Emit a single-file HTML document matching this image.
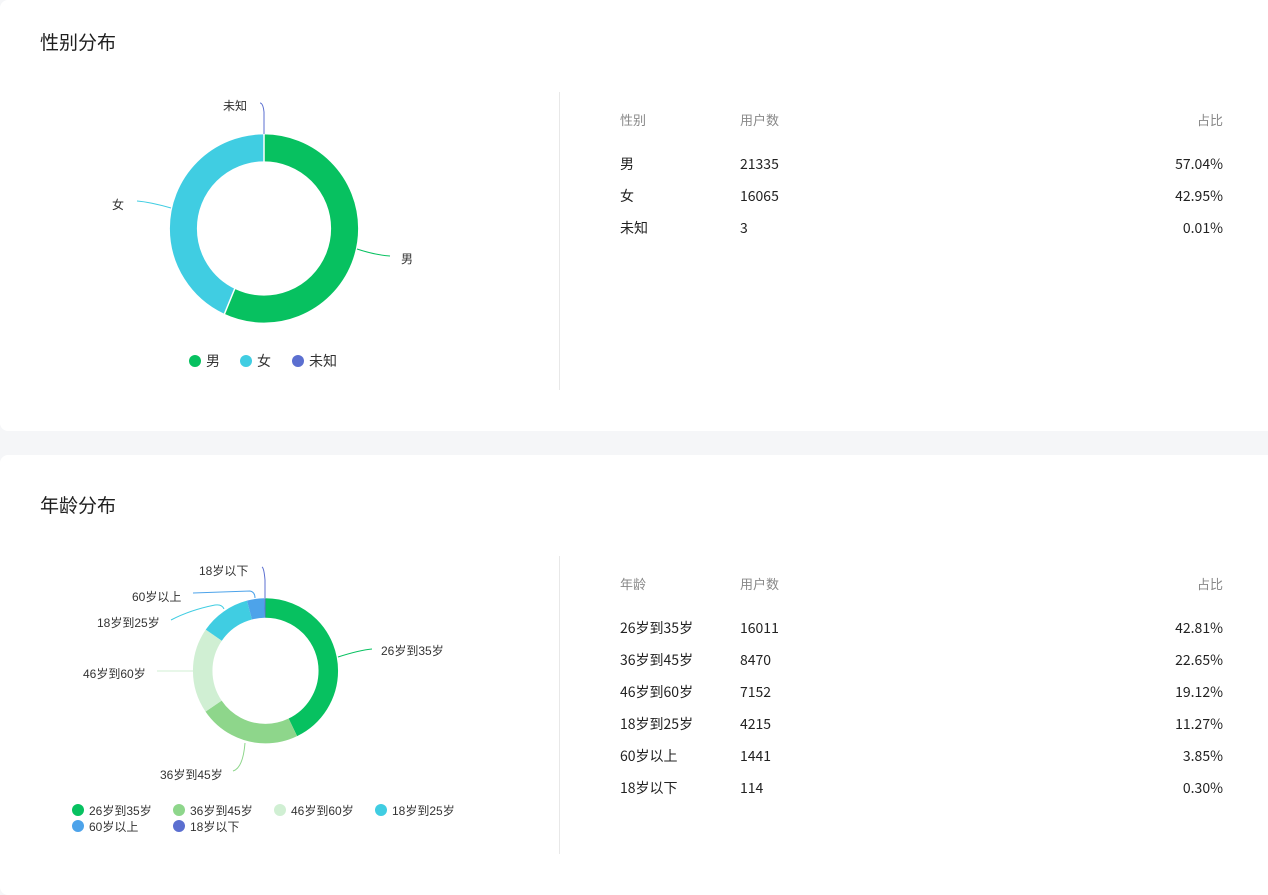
<!DOCTYPE html>
<html><head><meta charset="utf-8"><style>
body{margin:0;width:1268px;height:880px;background:#f5f6f8;font-family:"Liberation Sans","Noto Sans CJK SC",sans-serif;overflow:hidden;position:relative;color:#333}
.card{position:absolute;left:0;width:1280px;background:#fff;border-radius:8px}
.t{position:absolute;font-size:19px;color:#1f1f1f;left:40px;font-family:"Noto Sans CJK SC",sans-serif;line-height:26px}
.div{position:absolute;left:559px;width:1px;background:#e8e8e8}
.row{position:absolute;left:620px;width:603px;height:20px;font-size:14px;color:#222;font-family:"Noto Sans CJK SC",sans-serif;line-height:20px}
.row span{position:absolute;top:0}
.row .c2{left:120px}.row .c3{right:0}
.hd{color:#888;font-size:13px}
svg{position:absolute;left:0;top:0}
</style></head><body>
<div class="card" style="top:0;height:431px"></div>
<div class="card" style="top:455px;height:440px"></div>
<div class="t" style="top:29px">性别分布</div>
<div class="t" style="top:492px">年龄分布</div>
<div class="div" style="top:92px;height:298px"></div>
<div class="div" style="top:556px;height:298px"></div>

<div class="row hd" style="top:110px"><span>性别</span><span class="c2">用户数</span><span class="c3">占比</span></div>
<div class="row" style="top:154px"><span>男</span><span class="c2">21335</span><span class="c3">57.04%</span></div>
<div class="row" style="top:186px"><span>女</span><span class="c2">16065</span><span class="c3">42.95%</span></div>
<div class="row" style="top:218px"><span>未知</span><span class="c2">3</span><span class="c3">0.01%</span></div>

<div class="row hd" style="top:574px"><span>年龄</span><span class="c2">用户数</span><span class="c3">占比</span></div>
<div class="row" style="top:618px"><span>26岁到35岁</span><span class="c2">16011</span><span class="c3">42.81%</span></div>
<div class="row" style="top:650px"><span>36岁到45岁</span><span class="c2">8470</span><span class="c3">22.65%</span></div>
<div class="row" style="top:682px"><span>46岁到60岁</span><span class="c2">7152</span><span class="c3">19.12%</span></div>
<div class="row" style="top:714px"><span>18岁到25岁</span><span class="c2">4215</span><span class="c3">11.27%</span></div>
<div class="row" style="top:746px"><span>60岁以上</span><span class="c2">1441</span><span class="c3">3.85%</span></div>
<div class="row" style="top:778px"><span>18岁以下</span><span class="c2">114</span><span class="c3">0.30%</span></div>

<svg width="1268" height="880" font-family="Liberation Sans, Noto Sans CJK SC, sans-serif">
<g transform="translate(264,228.5) rotate(-90)" fill="none" stroke-width="27">
<circle r="80.6" stroke="#07c160" stroke-dasharray="288.8 1000"/>
<circle r="80.6" stroke="#40cde2" stroke-dasharray="217.5 1000" stroke-dashoffset="-288.8"/>
<circle r="80.6" stroke="#5b6fd0" stroke-dasharray="0.6 1000" stroke-dashoffset="-506.3"/>
</g>
<g stroke="#fff" stroke-width="1.5"><line x1="264" y1="133" x2="264" y2="162"/><line x1="224" y1="315" x2="235" y2="288"/></g>
<path d="M264 134 L264 112 Q263 103 260 103" stroke="#5b6fd0" fill="none"/>
<path d="M171 208 Q150 202 137 201" stroke="#40cde2" fill="none"/>
<path d="M357 249 Q375 255 390 256" stroke="#07c160" fill="none"/>
<g font-size="12" fill="#333"><text x="223" y="110">未知</text><text x="112" y="209">女</text><text x="401" y="263">男</text></g>
<g font-size="14" fill="#333">
<circle cx="195" cy="361" r="6" fill="#07c160"/><text x="206" y="366">男</text>
<circle cx="246" cy="361" r="6" fill="#40cde2"/><text x="257" y="366">女</text>
<circle cx="298" cy="361" r="6" fill="#5b6fd0"/><text x="309" y="366">未知</text>
</g>

<g transform="translate(265.5,670.8) rotate(-90)" fill="none" stroke-width="19.5">
<circle r="62.8" stroke="#07c160" stroke-dasharray="168.9 1000"/>
<circle r="62.8" stroke="#8ed68b" stroke-dasharray="89.4 1000" stroke-dashoffset="-168.9"/>
<circle r="62.8" stroke="#d0efd3" stroke-dasharray="75.4 1000" stroke-dashoffset="-258.3"/>
<circle r="62.8" stroke="#40cde2" stroke-dasharray="44.5 1000" stroke-dashoffset="-333.7"/>
<circle r="62.8" stroke="#4da3ea" stroke-dasharray="15.2 1000" stroke-dashoffset="-378.2"/>
<circle r="62.8" stroke="#5b6fd0" stroke-dasharray="1.2 1000" stroke-dashoffset="-393.4"/>
</g>
<path d="M265 598 L265 580 Q264 568 262 567" stroke="#5b6fd0" fill="none"/>
<path d="M255 598 Q255 592 250 591 L193 593" stroke="#4da3ea" fill="none"/>
<path d="M224 609 Q222 604 215 605 Q190 610 171 620" stroke="#40cde2" fill="none"/>
<path d="M193 671 L157 671" stroke="#d0efd3" fill="none"/>
<path d="M245 743 Q243 768 233 771" stroke="#8ed68b" fill="none"/>
<path d="M338 657 Q360 650 372 649" stroke="#07c160" fill="none"/>
<g font-size="12" fill="#333">
<text x="199" y="575">18岁以下</text><text x="132" y="601">60岁以上</text><text x="97" y="627">18岁到25岁</text>
<text x="83" y="678">46岁到60岁</text><text x="160" y="779">36岁到45岁</text><text x="381" y="655">26岁到35岁</text>
</g>
<g font-size="12" fill="#333">
<circle cx="78" cy="810" r="6" fill="#07c160"/><text x="89" y="815">26岁到35岁</text>
<circle cx="179" cy="810" r="6" fill="#8ed68b"/><text x="190" y="815">36岁到45岁</text>
<circle cx="280" cy="810" r="6" fill="#d0efd3"/><text x="291" y="815">46岁到60岁</text>
<circle cx="381" cy="810" r="6" fill="#40cde2"/><text x="392" y="815">18岁到25岁</text>
<circle cx="78" cy="826" r="6" fill="#4da3ea"/><text x="89" y="831">60岁以上</text>
<circle cx="179" cy="826" r="6" fill="#5b6fd0"/><text x="190" y="831">18岁以下</text>
</g>
</svg>
</body></html>
